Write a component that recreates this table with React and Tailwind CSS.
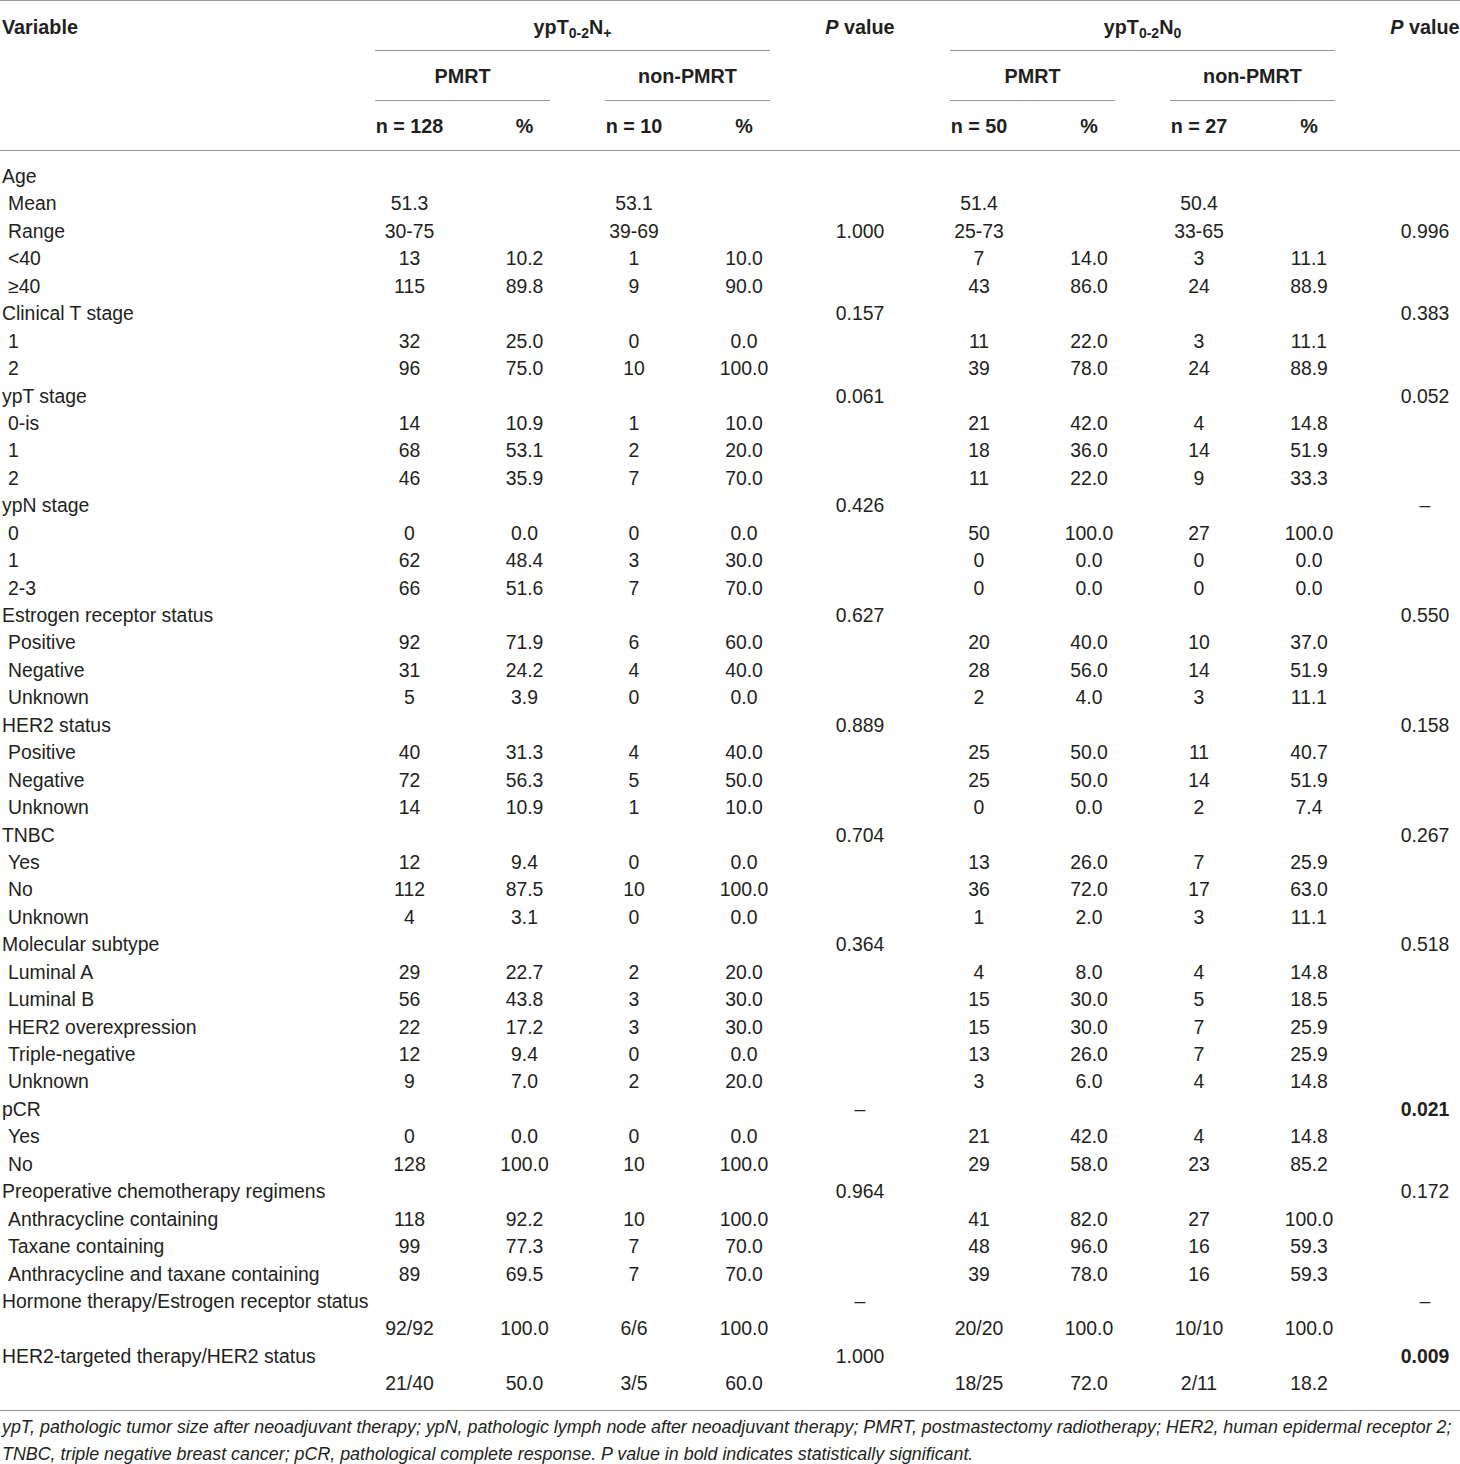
import React from 'react';

// [label, indent, pmrtN, pmrtPct, nonN, nonPct, p1, pmrt0N, pmrt0Pct, non0N, non0Pct, p2, boldP2]
const rows = [
  ['Age', 0],
  ['Mean', 1, '51.3', '', '53.1', '', '', '51.4', '', '50.4', '', ''],
  ['Range', 1, '30-75', '', '39-69', '', '1.000', '25-73', '', '33-65', '', '0.996'],
  ['<40', 1, '13', '10.2', '1', '10.0', '', '7', '14.0', '3', '11.1', ''],
  ['≥40', 1, '115', '89.8', '9', '90.0', '', '43', '86.0', '24', '88.9', ''],
  ['Clinical T stage', 0, '', '', '', '', '0.157', '', '', '', '', '0.383'],
  ['1', 1, '32', '25.0', '0', '0.0', '', '11', '22.0', '3', '11.1', ''],
  ['2', 1, '96', '75.0', '10', '100.0', '', '39', '78.0', '24', '88.9', ''],
  ['ypT stage', 0, '', '', '', '', '0.061', '', '', '', '', '0.052'],
  ['0-is', 1, '14', '10.9', '1', '10.0', '', '21', '42.0', '4', '14.8', ''],
  ['1', 1, '68', '53.1', '2', '20.0', '', '18', '36.0', '14', '51.9', ''],
  ['2', 1, '46', '35.9', '7', '70.0', '', '11', '22.0', '9', '33.3', ''],
  ['ypN stage', 0, '', '', '', '', '0.426', '', '', '', '', '–'],
  ['0', 1, '0', '0.0', '0', '0.0', '', '50', '100.0', '27', '100.0', ''],
  ['1', 1, '62', '48.4', '3', '30.0', '', '0', '0.0', '0', '0.0', ''],
  ['2-3', 1, '66', '51.6', '7', '70.0', '', '0', '0.0', '0', '0.0', ''],
  ['Estrogen receptor status', 0, '', '', '', '', '0.627', '', '', '', '', '0.550'],
  ['Positive', 1, '92', '71.9', '6', '60.0', '', '20', '40.0', '10', '37.0', ''],
  ['Negative', 1, '31', '24.2', '4', '40.0', '', '28', '56.0', '14', '51.9', ''],
  ['Unknown', 1, '5', '3.9', '0', '0.0', '', '2', '4.0', '3', '11.1', ''],
  ['HER2 status', 0, '', '', '', '', '0.889', '', '', '', '', '0.158'],
  ['Positive', 1, '40', '31.3', '4', '40.0', '', '25', '50.0', '11', '40.7', ''],
  ['Negative', 1, '72', '56.3', '5', '50.0', '', '25', '50.0', '14', '51.9', ''],
  ['Unknown', 1, '14', '10.9', '1', '10.0', '', '0', '0.0', '2', '7.4', ''],
  ['TNBC', 0, '', '', '', '', '0.704', '', '', '', '', '0.267'],
  ['Yes', 1, '12', '9.4', '0', '0.0', '', '13', '26.0', '7', '25.9', ''],
  ['No', 1, '112', '87.5', '10', '100.0', '', '36', '72.0', '17', '63.0', ''],
  ['Unknown', 1, '4', '3.1', '0', '0.0', '', '1', '2.0', '3', '11.1', ''],
  ['Molecular subtype', 0, '', '', '', '', '0.364', '', '', '', '', '0.518'],
  ['Luminal A', 1, '29', '22.7', '2', '20.0', '', '4', '8.0', '4', '14.8', ''],
  ['Luminal B', 1, '56', '43.8', '3', '30.0', '', '15', '30.0', '5', '18.5', ''],
  ['HER2 overexpression', 1, '22', '17.2', '3', '30.0', '', '15', '30.0', '7', '25.9', ''],
  ['Triple-negative', 1, '12', '9.4', '0', '0.0', '', '13', '26.0', '7', '25.9', ''],
  ['Unknown', 1, '9', '7.0', '2', '20.0', '', '3', '6.0', '4', '14.8', ''],
  ['pCR', 0, '', '', '', '', '–', '', '', '', '', '0.021', true],
  ['Yes', 1, '0', '0.0', '0', '0.0', '', '21', '42.0', '4', '14.8', ''],
  ['No', 1, '128', '100.0', '10', '100.0', '', '29', '58.0', '23', '85.2', ''],
  ['Preoperative chemotherapy regimens', 0, '', '', '', '', '0.964', '', '', '', '', '0.172'],
  ['Anthracycline containing', 1, '118', '92.2', '10', '100.0', '', '41', '82.0', '27', '100.0', ''],
  ['Taxane containing', 1, '99', '77.3', '7', '70.0', '', '48', '96.0', '16', '59.3', ''],
  ['Anthracycline and taxane containing', 1, '89', '69.5', '7', '70.0', '', '39', '78.0', '16', '59.3', ''],
  ['Hormone therapy/Estrogen receptor status', 0, '', '', '', '', '–', '', '', '', '', '–'],
  ['', 0, '92/92', '100.0', '6/6', '100.0', '', '20/20', '100.0', '10/10', '100.0', ''],
  ['HER2-targeted therapy/HER2 status', 0, '', '', '', '', '1.000', '', '', '', '', '0.009', true],
  ['', 0, '21/40', '50.0', '3/5', '60.0', '', '18/25', '72.0', '2/11', '18.2', ''],
];

const dataCols = 'grid grid-cols-[375px_69px_161px_58px_162px_70px_55px_58px_162px_58px_162px_70px]';

function Group({ sub }) {
  return (
    <span>
      ypT<sub className="text-[14px]">0-2</sub>N<sub className="text-[14px]">{sub}</sub>
    </span>
  );
}

export default function App() {
  return (
    <div className="w-[1460px] h-[1464px] overflow-hidden bg-white text-[#231f20] text-[19.4px] font-['Liberation_Sans',Arial,sans-serif]">
      {/* header */}
      <div className="border-t border-[#9a9a9a] text-[19.8px]">
        <div className="grid grid-cols-[375px_395px_55px_70px_55px_385px_55px_70px] h-[50px] leading-[27px] font-bold">
          <div className="pl-[2px] pt-[13px]">Variable</div>
          <div className="pt-[13px] text-center border-b border-[#9a9a9a]">
            <Group sub="+" />
          </div>
          <div />
          <div className="pt-[13px] text-center whitespace-nowrap"><i>P</i> value</div>
          <div />
          <div className="pt-[13px] text-center border-b border-[#9a9a9a]">
            <Group sub="0" />
          </div>
          <div />
          <div className="pt-[13px] text-center whitespace-nowrap"><i>P</i> value</div>
        </div>
        <div className="grid grid-cols-[375px_175px_55px_165px_180px_165px_55px_165px_125px] h-[50px] leading-[27px] font-bold">
          <div />
          <div className="pt-[12px] text-center border-b border-[#9a9a9a]">PMRT</div>
          <div />
          <div className="pt-[12px] text-center border-b border-[#9a9a9a]">non-PMRT</div>
          <div />
          <div className="pt-[12px] text-center border-b border-[#9a9a9a]">PMRT</div>
          <div />
          <div className="pt-[12px] text-center border-b border-[#9a9a9a]">non-PMRT</div>
          <div />
        </div>
        <div className={`${dataCols} h-[50px] leading-[27px] font-bold border-b border-[#9a9a9a]`}>
          <div />
          <div className="pt-[12px] text-center whitespace-nowrap">n = 128</div>
          <div className="pt-[12px] text-center">%</div>
          <div className="pt-[12px] text-center whitespace-nowrap">n = 10</div>
          <div className="pt-[12px] text-center">%</div>
          <div />
          <div />
          <div className="pt-[12px] text-center whitespace-nowrap">n = 50</div>
          <div className="pt-[12px] text-center">%</div>
          <div className="pt-[12px] text-center whitespace-nowrap">n = 27</div>
          <div className="pt-[12px] text-center">%</div>
          <div />
        </div>
      </div>

      {/* body */}
      <div className="pt-[12px] pb-[12px] border-b border-[#9a9a9a]">
        {rows.map((r, i) => {
          const [label, indent, a, b, c, d, p1, e, f, g, h, p2, bold] = r;
          return (
            <div key={i} className={`${dataCols} leading-[27.45px] h-[27.45px]`}>
              <div className={`whitespace-nowrap ${indent ? 'pl-[8px]' : 'pl-[2px]'}`}>{label}</div>
              <div className="text-center">{a}</div>
              <div className="text-center">{b}</div>
              <div className="text-center">{c}</div>
              <div className="text-center">{d}</div>
              <div className="text-center">{p1}</div>
              <div />
              <div className="text-center">{e}</div>
              <div className="text-center">{f}</div>
              <div className="text-center">{g}</div>
              <div className="text-center">{h}</div>
              <div className={`text-center ${bold ? 'font-bold' : ''}`}>{p2}</div>
            </div>
          );
        })}
      </div>

      {/* footnote */}
      <div className="pt-[3px] pl-[2px] italic text-[17.85px] leading-[27px] whitespace-nowrap">
        ypT, pathologic tumor size after neoadjuvant therapy; ypN, pathologic lymph node after neoadjuvant therapy; PMRT, postmastectomy radiotherapy; HER2, human epidermal receptor 2;
        <br />
        TNBC, triple negative breast cancer; pCR, pathological complete response. P value in bold indicates statistically significant.
      </div>
    </div>
  );
}
